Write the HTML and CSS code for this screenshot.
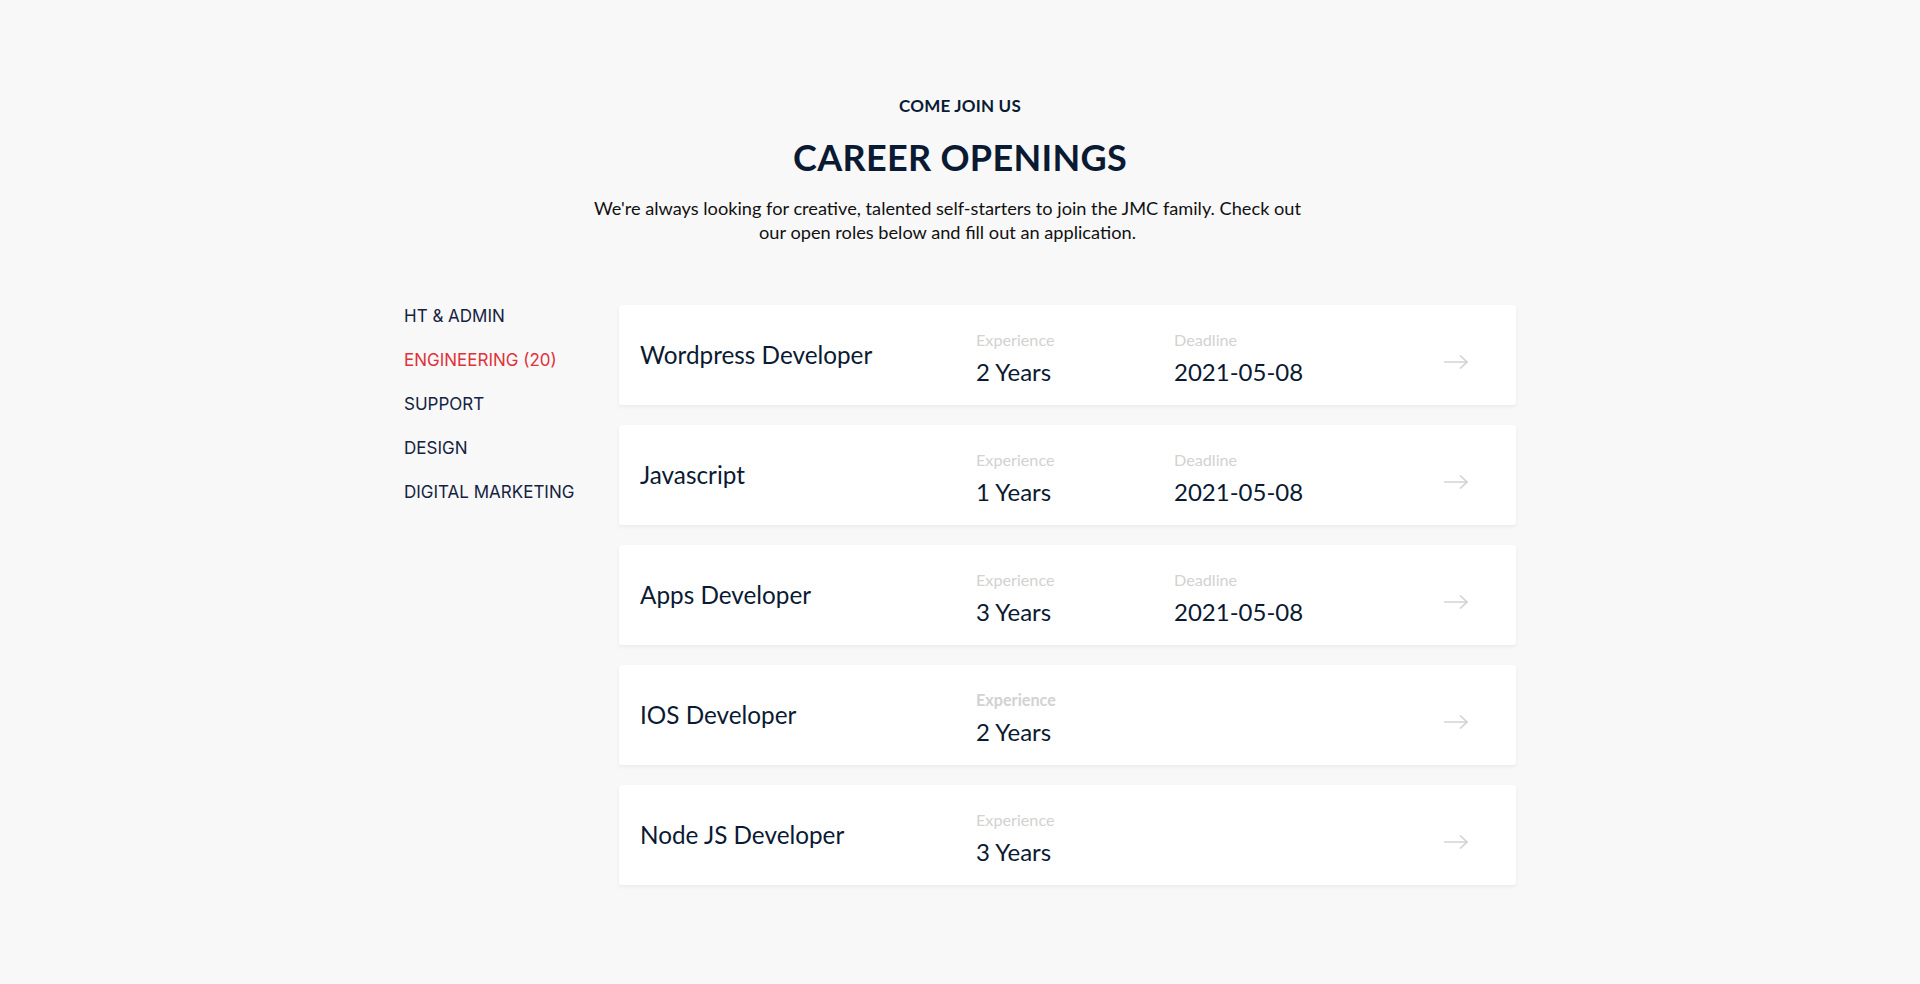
FILE: index.html
```html
<!DOCTYPE html>
<html lang="en">
<head>
<meta charset="utf-8">
<title>Career Openings</title>
<link rel="stylesheet" href="styles.css">
</head>
<body>
<section class="careers">
  <header class="intro">
    <p class="eyebrow">COME JOIN US</p>
    <h1 class="title">CAREER OPENINGS</h1>
    <p class="lead">We're always looking for creative, talented self-starters to join the JMC family. Check out our open roles below and fill out an application.</p>
  </header>
  <div class="board">
    <nav class="cats">
      <a class="cat">HT &amp; ADMIN</a>
      <a class="cat active">ENGINEERING (20)</a>
      <a class="cat">SUPPORT</a>
      <a class="cat">DESIGN</a>
      <a class="cat">DIGITAL MARKETING</a>
    </nav>
    <div class="jobs">
      <div class="job">
        <div class="job-title">Wordpress Developer</div>
        <div class="meta"><span class="label">Experience</span><span class="value">2 Years</span></div>
        <div class="meta"><span class="label">Deadline</span><span class="value">2021-05-08</span></div>
        <svg class="arrow" viewBox="0 0 24 14" width="24" height="14"><path d="M0 7H23M16 0.5L23 7L16 13.5" fill="none" stroke="#d3d3d3" stroke-width="1.6"/></svg>
      </div>
      <div class="job">
        <div class="job-title">Javascript</div>
        <div class="meta"><span class="label">Experience</span><span class="value">1 Years</span></div>
        <div class="meta"><span class="label">Deadline</span><span class="value">2021-05-08</span></div>
        <svg class="arrow" viewBox="0 0 24 14" width="24" height="14"><path d="M0 7H23M16 0.5L23 7L16 13.5" fill="none" stroke="#d3d3d3" stroke-width="1.6"/></svg>
      </div>
      <div class="job">
        <div class="job-title">Apps Developer</div>
        <div class="meta"><span class="label">Experience</span><span class="value">3 Years</span></div>
        <div class="meta"><span class="label">Deadline</span><span class="value">2021-05-08</span></div>
        <svg class="arrow" viewBox="0 0 24 14" width="24" height="14"><path d="M0 7H23M16 0.5L23 7L16 13.5" fill="none" stroke="#d3d3d3" stroke-width="1.6"/></svg>
      </div>
      <div class="job">
        <div class="job-title">IOS Developer</div>
        <div class="meta"><span class="label bold">Experience</span><span class="value">2 Years</span></div>
        <div class="meta"></div>
        <svg class="arrow" viewBox="0 0 24 14" width="24" height="14"><path d="M0 7H23M16 0.5L23 7L16 13.5" fill="none" stroke="#d3d3d3" stroke-width="1.6"/></svg>
      </div>
      <div class="job">
        <div class="job-title">Node JS Developer</div>
        <div class="meta"><span class="label">Experience</span><span class="value">3 Years</span></div>
        <div class="meta"></div>
        <svg class="arrow" viewBox="0 0 24 14" width="24" height="14"><path d="M0 7H23M16 0.5L23 7L16 13.5" fill="none" stroke="#d3d3d3" stroke-width="1.6"/></svg>
      </div>
    </div>
  </div>
</section>
</body>
</html>
```
FILE: styles.css
```css
html, body {
  margin: 0;
  padding: 0;
  background: #f8f8f8;
  color: #0b1a33;
  font-family: "Lato", "Noto Sans", sans-serif;
}
.careers {
  padding-top: 95px;
  padding-bottom: 60px;
}
.intro {
  text-align: center;
}
.eyebrow {
  margin: 0;
  font-size: 17px;
  line-height: 21px;
  font-weight: 700;
  letter-spacing: 0.2px;
}
.title {
  margin: 18px 0 0;
  font-size: 36px;
  line-height: 46px;
  font-weight: 700;
  letter-spacing: 0.3px;
}
.lead {
  margin: 16px auto 0;
  max-width: 722px;
  padding-right: 25px;
  font-size: 18.2px;
  line-height: 24px;
  color: #111;
}
.board {
  width: 1112px;
  margin: 61px auto 0;
  display: flex;
}
.cats {
  width: 215px;
  flex: none;
  display: flex;
  flex-direction: column;
  gap: 22px;
}
.cat {
  font-family: "Inter", sans-serif;
  font-size: 17px;
  line-height: 22px;
  color: #142341;
  cursor: pointer;
}
.cat.active {
  color: #e0323a;
}
.jobs {
  flex: 1;
  display: flex;
  flex-direction: column;
  gap: 20px;
}
.job {
  height: 100px;
  background: #fff;
  border-radius: 3px;
  box-shadow: 0 2px 4px rgba(0, 0, 0, 0.06);
  display: flex;
  align-items: center;
  padding: 0 48px 0 21px;
}
.job-title {
  width: 336px;
  font-size: 24.3px;
  line-height: 28px;
}
.meta {
  width: 198px;
  display: flex;
  flex-direction: column;
  margin-top: 5px;
}
.meta + .meta {
  flex: 1;
}
.label {
  font-size: 16.2px;
  line-height: 20px;
  color: #d2d2d2;
}
.label.bold {
  font-weight: 700;
}
.value {
  margin-top: 8px;
  font-size: 24px;
  line-height: 28px;
}
.arrow {
  flex: none;
  margin-top: 14px;
}
```
